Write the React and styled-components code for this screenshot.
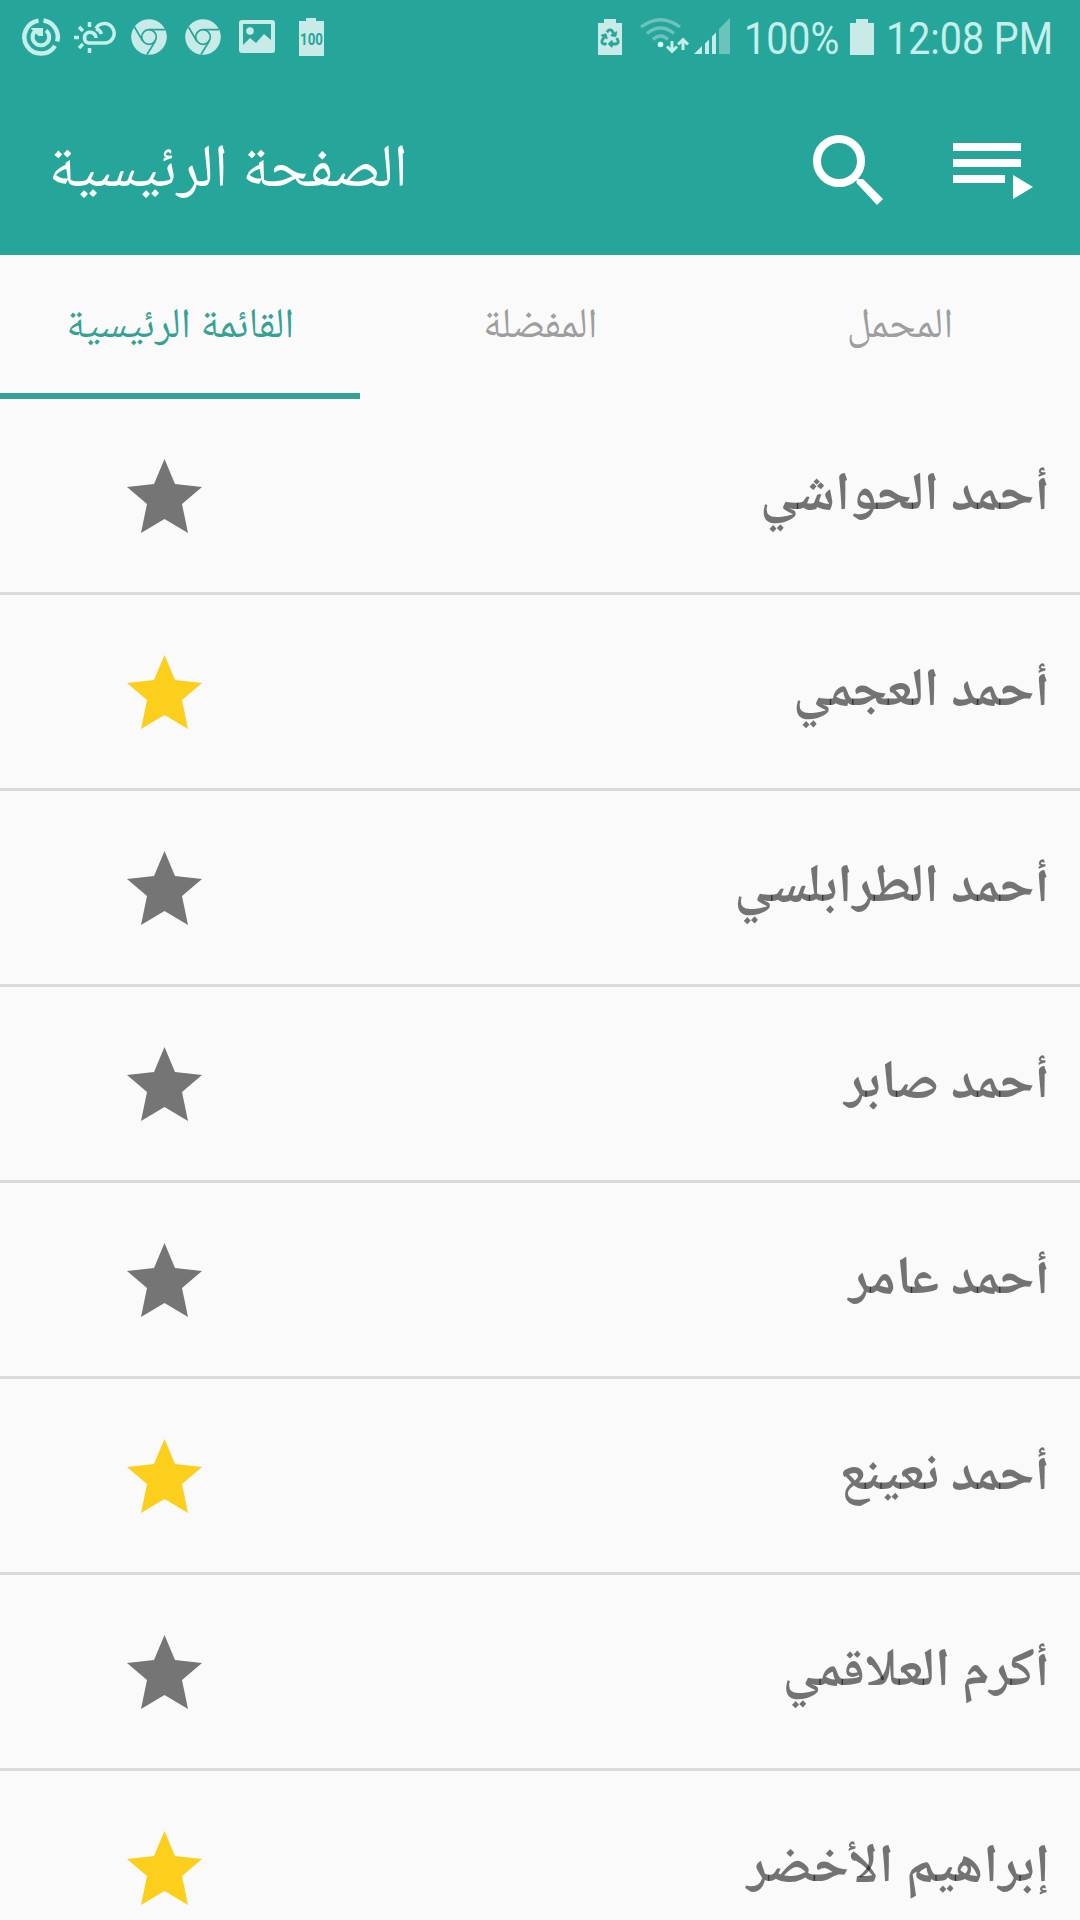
import styled, { createGlobalStyle } from 'styled-components'
import { FaRecycle } from 'react-icons/fa'

const GlobalStyle = createGlobalStyle`
  * {
    box-sizing: border-box;
  }

  body {
    margin: 0;
    background: #fafafa;
  }
`

const Screen = styled.div`
  width: 1080px;
  height: 1920px;
  overflow: hidden;
  background: #fafafa;
  font-family: 'Noto Naskh Arabic UI', 'Noto Naskh Arabic', 'Noto Sans Arabic', 'DejaVu Sans', sans-serif;
`

const Header = styled.header`
  height: 255px;
  background: #26a69a;
`

const StatusBar = styled.div`
  display: flex;
  justify-content: space-between;
  height: 72px;
  padding-left: 20px;
`

const StatusGroup = styled.div`
  display: flex;
`

const StatusIcon = styled.svg`
  flex: none;
  width: ${({ $width }) => $width}px;
  height: 72px;
  margin-right: ${({ $gap }) => $gap || 0}px;
  overflow: visible;
  color: #26a69a;
  fill: #c9ebe7;
`

const StatusText = styled.div`
  width: ${({ $width }) => $width}px;
  font: 400 45px/77px Roboto, sans-serif;
  color: #c5efea;
  white-space: nowrap;

  span {
    display: inline-block;
    transform: scaleX(0.875);
    transform-origin: left;
  }
`

const Toolbar = styled.div`
  display: flex;
  align-items: center;
  height: 183px;
  padding: 0 47px 0 48px;
`

const Title = styled.h1`
  flex: 1;
  margin: 0;
  padding-top: 15px;
  font-size: 60.5px;
  font-weight: 400;
  line-height: 80px;
  color: #fff;
`

const ToolIcon = styled.svg`
  width: ${({ $width }) => $width}px;
  height: 183px;
  margin-left: ${({ $gap }) => $gap || 0}px;
  fill: #fff;
`

const Tabs = styled.nav`
  display: grid;
  grid-template-columns: repeat(3, 1fr);
  height: 144px;
`

const Tab = styled.div`
  display: flex;
  align-items: center;
  justify-content: center;
  padding-top: 5px;
  border-bottom: 6px solid ${({ $active }) => ($active ? '#35a195' : 'transparent')};
  font-size: 42px;
  color: ${({ $active }) => ($active ? '#35a195' : '#9e9e9e')};
`

const Row = styled.div`
  display: flex;
  align-items: center;
  justify-content: space-between;
  height: 196px;
  padding: 1px 30px 0 127px;
  border-bottom: 3px solid #dadada;
`

const Star = styled.svg`
  width: 75px;
  height: 75px;
  fill: ${({ $active }) => ($active ? '#fbcf1b' : '#757575')};
`

const Name = styled.div`
  font-size: 54px;
  font-weight: 700;
  color: rgba(0, 0, 0, 0.54);
`

const people = [
  { name: 'أحمد الحواشي' },
  { name: 'أحمد العجمي', favorite: true },
  { name: 'أحمد الطرابلسي' },
  { name: 'أحمد صابر' },
  { name: 'أحمد عامر' },
  { name: 'أحمد نعينع', favorite: true },
  { name: 'أكرم العلاقمي' },
  { name: 'إبراهيم الأخضر', favorite: true },
]

const ChromeIcon = () => (
  <StatusIcon $width={36} $gap={18} viewBox="0 0 36 72">
    <circle cx="18" cy="37" r="17.800" />
    <g fill="none" stroke="#26a69a" strokeWidth="1.700">
      <circle cx="18" cy="37" r="7.300" />
      <path d="M18 29.700h16M11.700 41 3.500 27M24.300 41 16 54.500" />
    </g>
  </StatusIcon>
)

const App = () => (
  <Screen>
    <GlobalStyle />
    <Header>
      <StatusBar>
        <StatusGroup>
          <StatusIcon $width={42} $gap={11} viewBox="20 0 42 72">
            <g fill="none" stroke="#c5efea">
              <path strokeWidth="4.500" d="M38.500 20.600a16.600 16.600 0 1 0 16.500 25.300M43.500 20.600a16.600 16.600 0 0 1 13.700 20.900" />
              <path strokeWidth="4" d="M46 30.500a8.300 8.300 0 1 1-9.500-.5M41 28v8" />
            </g>
            <path fill="#c5efea" d="M30.500 28H39v8.500z" />
          </StatusIcon>
          <StatusIcon $width={44} $gap={14} viewBox="73 0 44 72">
            <g fill="none" stroke="#c5efea" strokeWidth="3.500">
              <path d="M96 38a6 6 0 0 0-11-3q-2 8 5 8h14.500a9.700 9.700 0 1 0-8.500-14.500M96 28.500q4 1.500 5.500 5.500" />
              <path d="M89.500 22v5M79 27l4 4M74 37.500h5M79 48l4-4M89.500 48v5" />
            </g>
          </StatusIcon>
          <ChromeIcon />
          <ChromeIcon />
          <StatusIcon $width={36} $gap={24} viewBox="239 0 36 72">
            <path
              fillRule="evenodd"
              d="M242 20h30q3 0 3 3v27q0 3-3 3h-30q-3 0-3-3V23q0-3 3-3zM243 24v21l7-7 6 5 8-9 7 6V24z"
            />
            <circle cx="250" cy="31" r="3.800" />
          </StatusIcon>
          <StatusIcon $width={25} viewBox="299 0 25 72">
            <path d="M306 18h10v3h8v35h-25V21h7z" />
            <text
              x="311.500"
              y="45"
              textAnchor="middle"
              textLength="23"
              lengthAdjust="spacingAndGlyphs"
              fill="#26a69a"
              fontFamily="Roboto, sans-serif"
              fontSize="16"
              fontWeight="700"
            >
              100
            </text>
          </StatusIcon>
        </StatusGroup>
        <StatusGroup>
          <StatusIcon $width={24} $gap={18} viewBox="598 0 24 72">
            <path d="M604 19h12v4h6v32h-24V23h6z" />
            <FaRecycle x="600.500" y="28.500" size={19} stroke="#26a69a" strokeWidth="14" />
          </StatusIcon>
          <StatusIcon $width={48} $gap={6} viewBox="640 0 48 72">
            <g fill="none" stroke="#6cc3bb" strokeWidth="3.300">
              <path d="M641 27q19.500-14.500 39 0M647 33.500q13.500-11 27 0M653 39.500q7.500-7 15 0" />
            </g>
            <circle cx="660.500" cy="44.500" r="2.800" fill="#d8fffb" />
            <path fill="none" stroke="#c5efea" strokeWidth="3" d="M672 41v10M667 46.500l5 5 5-5M683 50V40M678 44.500l5-5 5 5" />
          </StatusIcon>
          <StatusIcon $width={37} $gap={13} viewBox="694 0 37 72">
            <path d="M694 54l8-8v8zM705 54V43.500l4-4V54zM712 54V36.500l4-4V54z" />
            <path fill="#6cc3bb" d="M719 54V29l11-11v36z" />
          </StatusIcon>
          <StatusText $width={106}>
            <span>100%</span>
          </StatusText>
          <StatusIcon $width={24} $gap={12} viewBox="850 0 24 72">
            <path d="M856 19h12v4h6v32h-24V23h6z" />
          </StatusIcon>
          <StatusText $width={194}>
            <span>12:08 PM</span>
          </StatusText>
        </StatusGroup>
      </StatusBar>
      <Toolbar>
        <Title>الصفحة الرئيسية</Title>
        <ToolIcon $width={70} viewBox="813 72 70 183">
          <circle cx="839" cy="161" r="22" fill="none" stroke="#fff" strokeWidth="8" />
          <path d="M856.500 183v-4h6.500l20 20-6 6z" />
        </ToolIcon>
        <ToolIcon $width={80} $gap={70} viewBox="953 72 80 183">
          <path d="M953 143h68v8h-68zM953 159h68v8h-68zM953 175h52v8h-52zM1013 175l20 12-20 12z" />
        </ToolIcon>
      </Toolbar>
    </Header>
    <Tabs>
      <Tab $active>القائمة الرئيسية</Tab>
      <Tab>المفضلة</Tab>
      <Tab>المحمل</Tab>
    </Tabs>
    {people.map(({ name, favorite }) => (
      <Row key={name}>
        <Star $active={favorite} viewBox="0 0 75 75">
          <path d="M37.500 0 48 25l27 3-20 17 6 29-23.500-14L14 74l6-29L0 28l27-3z" />
        </Star>
        <Name dir="rtl">{name}</Name>
      </Row>
    ))}
  </Screen>
)

export default App
